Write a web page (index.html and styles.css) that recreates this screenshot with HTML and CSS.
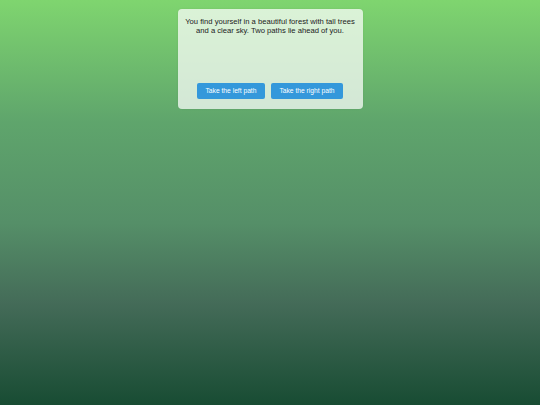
FILE: index.html
```html
<!DOCTYPE html>
<html>
<head>
<meta charset="utf-8">
<link rel="stylesheet" href="styles.css">
</head>
<body>
<div class="scene">
  <div class="card">
    <p class="story">You find yourself in a beautiful forest with tall trees and a clear sky. Two paths lie ahead of you.</p>
    <div class="choices">
      <button class="choice">Take the left path</button>
      <button class="choice">Take the right path</button>
    </div>
  </div>
</div>
</body>
</html>
```
FILE: styles.css
```css
html, body {
  margin: 0;
  padding: 0;
  height: 100%;
}
body {
  background: linear-gradient(to bottom, #7fd56f 0%, #5fa56c 30%, #558f68 55%, #446b58 75%, #184c33 100%);
  font-family: "Liberation Sans", Arial, sans-serif;
}
.scene {
  display: flex;
  justify-content: center;
  padding-top: 8.5px;
}
.card {
  width: 185px;
  box-sizing: border-box;
  background: rgba(255, 255, 255, 0.72);
  border-radius: 4px;
  padding: 8px 5px 10px;
  display: flex;
  flex-direction: column;
  align-items: center;
  box-shadow: 0 0 2px rgba(0,0,0,0.08);
}
.story {
  margin: 0;
  font-size: 7.65px;
  line-height: 9px;
  color: #1a221d;
  text-align: center;
  min-height: 66px;
}
.choices {
  display: flex;
  gap: 6px;
}
.choice {
  font-family: "Liberation Sans", Arial, sans-serif;
  font-size: 6.7px;
  height: 16px;
  padding: 0 8.5px;
  border: none;
  border-radius: 2px;
  background: #3498db;
  color: #ffffff;
}
```
